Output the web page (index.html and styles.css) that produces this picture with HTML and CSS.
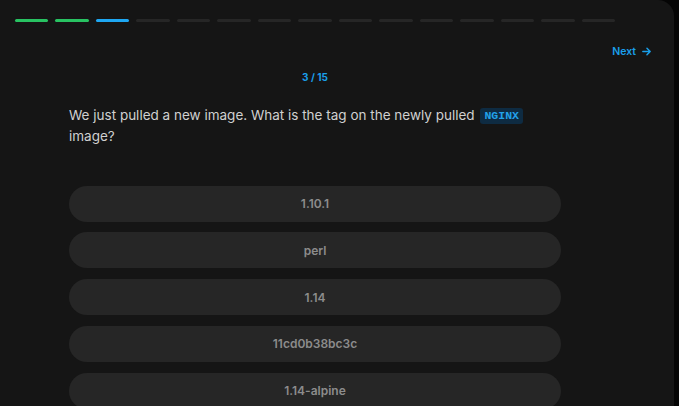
FILE: index.html
```html
<!DOCTYPE html>
<html>
<head>
<meta charset="utf-8">
<link rel="stylesheet" href="styles.css">
</head>
<body>
<div class="card">
  <div class="progress">
    <span class="seg done"></span><span class="seg done"></span><span class="seg current"></span>
    <span class="seg"></span><span class="seg"></span><span class="seg"></span><span class="seg"></span>
    <span class="seg"></span><span class="seg"></span><span class="seg"></span><span class="seg"></span>
    <span class="seg"></span><span class="seg"></span><span class="seg"></span><span class="seg"></span>
  </div>
  <div class="nav">
    <a class="next">Next
      <svg width="11" height="11" viewBox="0 0 12 12" fill="none" stroke="currentColor" stroke-width="1.6" stroke-linecap="round" stroke-linejoin="round"><path d="M2 6h8M6.5 2.5L10 6l-3.5 3.5"/></svg>
    </a>
  </div>
  <div class="content">
    <div class="counter">3 / 15</div>
    <p class="question">We just pulled a new image. What is the tag on the newly pulled <code class="code">NGINX</code> image?</p>
    <div class="options">
      <div class="option">1.10.1</div>
      <div class="option">perl</div>
      <div class="option">1.14</div>
      <div class="option">11cd0b38bc3c</div>
      <div class="option">1.14-alpine</div>
    </div>
  </div>
</div>
</body>
</html>
```
FILE: styles.css
```css
html, body {
  margin: 0;
  padding: 0;
  background: #050505;
  height: 100%;
  overflow: hidden;
}
body {
  font-family: Inter, "Noto Sans", sans-serif;
}
.card {
  width: 674px;
  min-height: 460px;
  background: #151515;
  border-radius: 0 16px 0 0;
  box-sizing: border-box;
  padding-top: 19px;
}
.progress {
  display: flex;
  gap: 7px;
  width: 600px;
  margin-left: 15px;
}
.seg {
  flex: 1;
  height: 2.5px;
  border-radius: 2px;
  background: #262626;
}
.seg.done { background: #28c262; }
.seg.current { background: #1ea7f2; }
.nav {
  display: flex;
  justify-content: flex-end;
  padding-right: 22px;
  margin-top: 23px;
}
.next {
  display: flex;
  align-items: center;
  gap: 5px;
  color: #1a9fea;
  font-size: 10.5px;
  font-weight: 600;
  line-height: 14px;
}
.content {
  width: 492px;
  margin-left: 69px;
}
.counter {
  margin-top: 11px;
  text-align: center;
  color: #1a9fea;
  font-size: 10px;
  font-weight: 700;
  line-height: 14px;
}
.question {
  margin: 21px 0 0;
  color: #d0d0d0;
  font-size: 13.5px;
  line-height: 21px;
}
.code {
  display: inline-block;
  font-family: "Liberation Mono", monospace;
  font-size: 11.5px;
  font-weight: 700;
  line-height: 16px;
  padding: 0 4px;
  margin-left: 2px;
  border-radius: 3px;
  background: #0e2b42;
  color: #22a2ea;
  vertical-align: 1px;
}
.options {
  display: flex;
  flex-direction: column;
  gap: 10.75px;
  margin-top: 39px;
}
.option {
  height: 36px;
  border-radius: 18px;
  background: #262626;
  color: #8c8c8c;
  font-size: 12px;
  font-weight: 600;
  display: flex;
  align-items: center;
  justify-content: center;
}
```
